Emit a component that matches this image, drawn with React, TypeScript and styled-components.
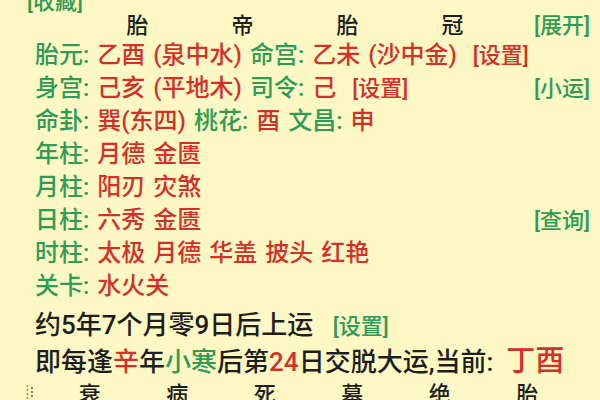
import React from "react";
import styled, { createGlobalStyle } from "styled-components";

const Global = createGlobalStyle`
  html, body { margin: 0; padding: 0; background: #fdf8c4; }
  body { font-family: Roboto, "Noto Sans CJK SC", "Noto Sans", sans-serif; }
`;

const GREEN = "#2e9c54";
const RED = "#d2312a";
const BLACK = "#1e1e1e";

const Page = styled.div`
  width: 600px;
  height: 400px;
  overflow: hidden;
  box-sizing: border-box;
  padding: 0 10px 0 35px;
  background: #fdf8c4;
  display: flex;
  flex-direction: column;
  font-weight: 500;
`;

const FavRow = styled.div`
  height: 20px;
  line-height: 20px;
  margin-top: -8px;
  margin-left: -8px;
  font-size: 22px;
  color: ${GREEN};
`;

const HeaderRow = styled.div`
  height: 22px;
  display: flex;
  align-items: center;
  margin-left: 50px;
  margin-bottom: 2px;
`;

const Cols = styled.div<{ $w: number; $n: number; $offset?: number }>`
  display: grid;
  grid-template-columns: repeat(${(p) => p.$n}, ${(p) => p.$w}px);
  margin-left: ${(p) => p.$offset ?? 0}px;
`;

const Cell = styled.span`
  text-align: center;
  font-size: 22px;
  color: ${BLACK};
`;

const Row = styled.div<{ $h: number; $gapTop?: number }>`
  height: ${(p) => p.$h}px;
  margin-top: ${(p) => p.$gapTop ?? 0}px;
  display: flex;
  align-items: center;
  white-space: nowrap;
`;

const Text = styled.div<{ $size: number; $spacing?: number }>`
  font-size: ${(p) => p.$size}px;
  color: ${BLACK};
  white-space: pre;
  word-spacing: ${(p) => p.$spacing ?? 0}px;
`;

const Label = styled.span`
  color: ${GREEN};
`;

const Value = styled.span`
  color: ${RED};
`;

const Tag = styled.span<{ $c: "red" | "green"; $right?: boolean }>`
  font-size: 22px;
  color: ${(p) => (p.$c === "red" ? RED : GREEN)};
  margin-left: ${(p) => (p.$right ? "auto" : "0")};
  white-space: pre;
`;

const Hi = styled.span<{ $c: "red" | "green"; $size?: number }>`
  color: ${(p) => (p.$c === "red" ? RED : GREEN)};
  ${(p) => (p.$size ? `font-size: ${p.$size}px;` : "")}
`;

const BottomRow = styled.div`
  height: 34px;
  display: flex;
  align-items: center;
  margin-left: -10px;
`;

const Dots = styled.svg`
  width: 10px;
  height: 16px;
  flex: none;
`;

const Info = ({ children }: { children: React.ReactNode }) => (
  <Text $size={24} $spacing={2}>
    {children}
  </Text>
);

export default function App() {
  return (
    <>
      <Global />
      <Page>
        <FavRow>[收藏]</FavRow>
        <HeaderRow>
          <Cols $w={105} $n={4}>
            <Cell>胎</Cell>
            <Cell>帝</Cell>
            <Cell>胎</Cell>
            <Cell>冠</Cell>
          </Cols>
          <Tag $c="green" $right>[展开]</Tag>
        </HeaderRow>

        <Row $h={33}>
          <Info>
            <Label>胎元: </Label>
            <Value>乙酉 (泉中水) </Value>
            <Label>命宫: </Label>
            <Value>乙未 (沙中金)  </Value>
            <Tag $c="red">[设置]</Tag>
          </Info>
        </Row>
        <Row $h={33}>
          <Info>
            <Label>身宫: </Label>
            <Value>己亥 (平地木) </Value>
            <Label>司令: </Label>
            <Value>己  </Value>
            <Tag $c="red">[设置]</Tag>
          </Info>
          <Tag $c="green" $right>[小运]</Tag>
        </Row>
        <Row $h={33}>
          <Info>
            <Label>命卦: </Label>
            <Value>巽(东四) </Value>
            <Label>桃花: </Label>
            <Value>酉 </Value>
            <Label>文昌: </Label>
            <Value>申</Value>
          </Info>
        </Row>
        <Row $h={33}>
          <Info>
            <Label>年柱: </Label>
            <Value>月德 金匮</Value>
          </Info>
        </Row>
        <Row $h={33}>
          <Info>
            <Label>月柱: </Label>
            <Value>阳刃 灾煞</Value>
          </Info>
        </Row>
        <Row $h={33}>
          <Info>
            <Label>日柱: </Label>
            <Value>六秀 金匮</Value>
          </Info>
          <Tag $c="green" $right>[查询]</Tag>
        </Row>
        <Row $h={33}>
          <Info>
            <Label>时柱: </Label>
            <Value>太极 月德 华盖 披头 红艳</Value>
          </Info>
        </Row>
        <Row $h={33}>
          <Info>
            <Label>关卡: </Label>
            <Value>水火关</Value>
          </Info>
        </Row>

        <Row $h={36} $gapTop={4}>
          <Text $size={26}>
            约5年7个月零9日后上运   <Tag $c="green">[设置]</Tag>
          </Text>
        </Row>
        <Row $h={36}>
          <Text $size={26}>
            即每逢<Hi $c="red">辛</Hi>年<Hi $c="green">小寒</Hi>后第<Hi $c="red">24</Hi>日交脱大运,当前:  <Hi $c="red" $size={29}>丁酉</Hi>
          </Text>
        </Row>

        <BottomRow>
          <Dots viewBox="0 0 10 16">
            {[2, 6, 10, 14].map((y) => (
              <circle key={"a" + y} cx="2.5" cy={y} r="1.1" fill="#b08a50" />
            ))}
            {[4, 8, 12].map((y) => (
              <circle key={"b" + y} cx="7" cy={y} r="1.1" fill="#7a5a30" />
            ))}
          </Dots>
          <Cols $w={87.5} $n={6} $offset={11}>
            <Cell>衰</Cell>
            <Cell>病</Cell>
            <Cell>死</Cell>
            <Cell>墓</Cell>
            <Cell>绝</Cell>
            <Cell>胎</Cell>
          </Cols>
        </BottomRow>
      </Page>
    </>
  );
}
